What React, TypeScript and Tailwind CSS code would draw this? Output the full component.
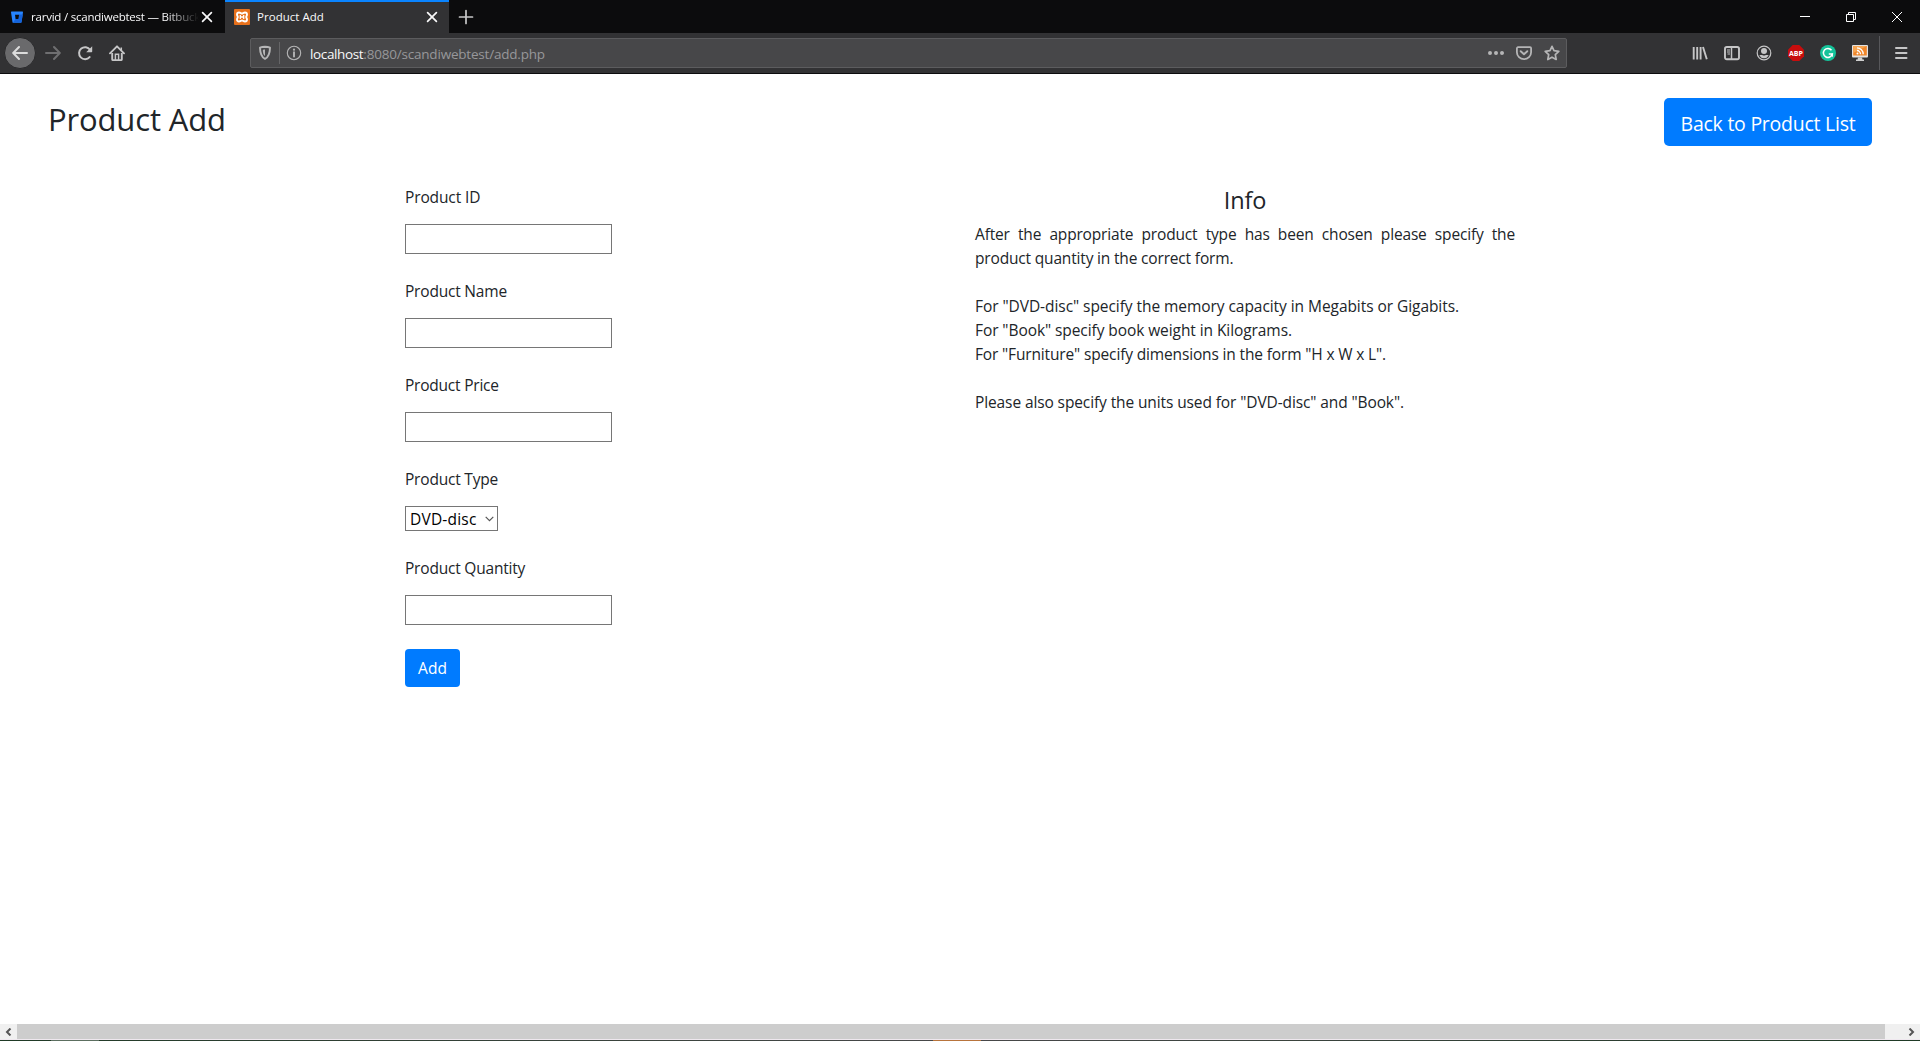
import type { ReactNode } from 'react';

function Icon({ size = 16, children, className = '' }: { size?: number; children: ReactNode; className?: string }) {
  return (
    <svg width={size} height={size} viewBox={`0 0 ${size} ${size}`} fill="none" className={`block shrink-0 ${className}`}>
      {children}
    </svg>
  );
}

function CloseTab() {
  return (
    <Icon>
      <path d="M3.6 3.6l8.8 8.8M12.4 3.6l-8.8 8.8" stroke="#f9f9fa" strokeWidth="1.7" strokeLinecap="round" />
    </Icon>
  );
}

function TabBar() {
  return (
    <div className="flex h-[33px] bg-[#0c0c0d] text-[#f9f9fa]">
      <div className="flex w-[225px] items-center pt-px pr-[9px] pl-[9px]">
        <Icon>
          <path d="M2.6 2.5h10.8a.6.6 0 0 1 .6.7l-1.5 10a.6.6 0 0 1-.6.5H4.1a.6.6 0 0 1-.6-.5L2 3.2a.6.6 0 0 1 .6-.7z" fill="#2684ff" />
          <path d="M13.8 5.5H10L9.4 10H6.5L4 13.5h8.1a.6.6 0 0 0 .4-.4z" fill="#1463dc" />
          <path d="M6 5.7h4.1L9.4 10H6.6z" fill="#0c0c0d" />
        </Icon>
        <div className="ml-[6px] w-[168px] overflow-hidden text-[11.5px] leading-4 tracking-[-0.22px] whitespace-nowrap [mask-image:linear-gradient(to_right,black_calc(100%_-_34px),transparent)]">
          rarvid / scandiwebtest — Bitbucket
        </div>
        <CloseTab />
      </div>
      <div className="flex w-[224px] items-center border-t-2 border-[#0a84ff] bg-[#323234] pr-[9px] pb-px pl-[9px]">
        <Icon>
          <rect width="16" height="16" rx="1" fill="#e8711c" />
          <path d="M5 3.500c1.500 0 2 1.100 3 1.100s1.500-1.100 3-1.100c1.300 0 2 .9 2 2.100 0 1.100-.8 1.600-.8 2.400s.8 1.300.8 2.400c0 1.200-.7 2.100-2 2.100-1.500 0-2-1.100-3-1.100s-1.500 1.100-3 1.100c-1.300 0-2-.9-2-2.100 0-1.100.8-1.600.8-2.400S3 6.700 3 5.600c0-1.200.7-2.100 2-2.100z" stroke="#fff" strokeWidth="1.900" />
          <path d="M6.300 6v4M9.700 6v4M6.300 8h3.400" stroke="#fff" strokeWidth="1.300" />
        </Icon>
        <div className="ml-[7px] grow text-[11.5px] leading-4 tracking-[0.03px] whitespace-nowrap">Product Add</div>
        <CloseTab />
      </div>
      <div className="flex w-[34px] items-center justify-center">
        <Icon>
          <path d="M8 1.500v13M1.500 8h13" stroke="#c8c8c9" strokeWidth="1.700" strokeLinecap="round" />
        </Icon>
      </div>
      <div className="ml-auto flex">
        <div className="flex w-[46px] items-center justify-center">
          <Icon size={10}><path d="M0 4.500h10" stroke="#fff" /></Icon>
        </div>
        <div className="flex w-[46px] items-center justify-center">
          <Icon size={10}>
            <path d="M.5 2.500h7v7h-7zM2.500 2.500v-2h7v7h-2" stroke="#fff" />
          </Icon>
        </div>
        <div className="flex w-[46px] items-center justify-center">
          <Icon size={10}><path d="M0 0l10 10M10 0L0 10" stroke="#fff" /></Icon>
        </div>
      </div>
    </div>
  );
}

function AddressBar() {
  return (
    <div className="ml-[125px] flex h-[30px] w-[1317px] items-center rounded-[2px] border border-[#5c5c5e] bg-[#474749] pl-[6px] text-[#b5b5b6]">
      <Icon>
        <path d="M8 1.800c2 .1 3.700.4 5 .9-.1 5.100-.8 9.100-5 11.100C3.800 11.800 3.100 7.800 3 2.700 4.300 2.200 6 1.900 8 1.800z" stroke="currentColor" strokeWidth="1.900" strokeLinejoin="round" />
        <path d="M8 4.600c-.8 0-1.500.1-2.200.3.100 3.100.6 4.900 2.200 6.100z" fill="currentColor" />
      </Icon>
      <div className="ml-[6px] h-[22px] w-px bg-[#656567]" />
      <Icon className="ml-[6px]">
        <circle cx="8" cy="8" r="6.700" stroke="currentColor" strokeWidth="1.100" />
        <circle cx="8" cy="4.700" r="1.100" fill="currentColor" />
        <path d="M8 7.200v4.300" stroke="currentColor" strokeWidth="1.900" strokeLinecap="round" />
      </Icon>
      <div className="ml-[8px] pt-px text-[13.5px] leading-5 whitespace-nowrap">
        <span className="tracking-[-0.36px] text-[#f9f9fa]">localhost</span>
        <span className="tracking-[-0.2px] text-[#97979a]">:8080/scandiwebtest/add.php</span>
      </div>
      <div className="ml-auto flex gap-3 pr-[6px]">
        <Icon>
          <path d="M2 8h.01M8 8h.01M14 8h.01" stroke="currentColor" strokeWidth="4" strokeLinecap="round" />
        </Icon>
        <Icon>
          <path d="M2 2.200h12a1.100 1.100 0 0 1 1.100 1.100v4A7.100 6.800 0 0 1 .9 7.300v-4A1.100 1.100 0 0 1 2 2.200z" stroke="currentColor" strokeWidth="1.800" />
          <path d="M4.700 6.200L8 9.200l3.300-3" stroke="currentColor" strokeWidth="1.900" strokeLinecap="round" strokeLinejoin="round" />
        </Icon>
        <Icon>
          <path d="M8 1.300l2 4.400 4.800.6-3.500 3.300.9 4.900L8 12.200l-4.200 2.300.9-4.900L1.200 6.300 6 5.700z" stroke="currentColor" strokeWidth="1.700" strokeLinejoin="round" />
        </Icon>
      </div>
    </div>
  );
}

function Toolbar() {
  return (
    <div className="flex h-[41px] items-center border-b border-[#0c0c0d] bg-[#323234] text-[#c6c6c7]">
      <div className="ml-1 flex size-8 items-center justify-center rounded-full border border-[#29292b] bg-[#6a6a6c]">
        <Icon>
          <path d="M15 8H1.500M7 2L1.200 8 7 14" stroke="#dcdcdc" strokeWidth="2" strokeLinecap="round" strokeLinejoin="round" />
        </Icon>
      </div>
      <Icon className="ml-[9px]">
        <path d="M1 8h13.500M9 2l5.800 6L9 14" stroke="#6f6f71" strokeWidth="2" strokeLinecap="round" strokeLinejoin="round" />
      </Icon>
      <Icon className="ml-4">
        <path d="M12.600 12.100A6 6 0 1 1 13 4.700" stroke="currentColor" strokeWidth="2" strokeLinecap="round" />
        <path d="M15.200 1.200v5.300a.7.700 0 0 1-.7.700H9.200z" fill="currentColor" />
      </Icon>
      <Icon className="ml-4">
        <path d="M1 8.300L8 1.300l7 7" stroke="currentColor" strokeWidth="1.900" strokeLinecap="round" strokeLinejoin="round" />
        <path d="M3.200 8v6.300a.8.800 0 0 0 .8.800h8a.8.800 0 0 0 .8-.8V8" stroke="currentColor" strokeWidth="1.900" />
        <path d="M6.400 15V9.300h3.200V15M12.300 2.500v3" stroke="currentColor" strokeWidth="1.500" />
      </Icon>
      <AddressBar />
      <div className="ml-[125px] flex gap-4">
        <Icon>
          <path d="M1.700 2v12.500M5.200 2v12.500M8.600 2v12.500M11 2l3.800 12.300" stroke="currentColor" strokeWidth="1.900" />
        </Icon>
        <Icon>
          <rect x="1" y="2" width="14" height="12.300" rx="1.800" stroke="currentColor" strokeWidth="1.900" />
          <path d="M7.500 2v12.300" stroke="currentColor" strokeWidth="1.500" />
          <path d="M3 5h3M3 7h3M3.500 9H6" stroke="currentColor" />
        </Icon>
        <Icon>
          <circle cx="8" cy="8" r="6.800" stroke="currentColor" strokeWidth="1.200" />
          <circle cx="8" cy="6" r="3" fill="currentColor" />
          <path d="M3.300 10.600c1.400-.9 2.200-.6 2.900-.6 1.100.7 2.500.7 3.600 0 .7 0 1.500-.3 2.900.6A5.500 5.500 0 0 1 8 13.300a5.500 5.500 0 0 1-4.700-2.700z" fill="currentColor" />
        </Icon>
        <svg width="16" height="16" viewBox="0 0 16 16" className="block">
          <path d="M4.700 0h6.600L16 4.700v6.600L11.300 16H4.700L0 11.300V4.700z" fill="#c70d0d" />
          <text x="8" y="10.800" textAnchor="middle" fontSize="7.600" fontWeight="700" fill="#fff" textLength="14" lengthAdjust="spacingAndGlyphs">ABP</text>
        </svg>
        <Icon>
          <circle cx="8" cy="8" r="8" fill="#15c39a" />
          <path d="M11.500 5.200A4.500 4.500 0 1 0 12.300 9H8.800" stroke="#fff" strokeWidth="1.500" />
          <path d="M12.300 8.500v3.300" stroke="#fff" strokeWidth="1.200" />
        </Icon>
        <Icon>
          <rect width="16" height="12.500" rx="1" fill="#e4e2e0" />
          <rect x="1.200" y="1" width="13.600" height="9.500" fill="#f0862a" />
          <path d="M1.200 1h13.600L1.200 8z" fill="#f6a552" />
          <path d="M5.500 8.600h.01" stroke="#fff" strokeWidth="2" strokeLinecap="round" />
          <path d="M5 5.500A3.600 3.600 0 0 1 8.500 9.200M5 2.800a6.300 6.300 0 0 1 6.200 6.400" stroke="#fff" strokeWidth="1.300" />
          <path d="M6 12.500h4l.5 2H12V16H4v-1.500h1.500z" fill="#cfcfcf" />
        </Icon>
      </div>
      <div className="ml-[11px] h-[34px] w-px bg-[#57575a]" />
      <Icon className="ml-[13px]">
        <path d="M3 3h10.500M3 8h10.500M3 13h10.500" stroke="currentColor" strokeWidth="2" strokeLinecap="round" />
      </Icon>
    </div>
  );
}

function Field({ label, tracking }: { label: string; tracking: string }) {
  return (
    <label className="block">
      <span className={`block leading-6 ${tracking}`}>{label}</span>
      <input type="text" className="mt-[15px] block h-[30px] w-[207px] border border-[#767676] bg-white px-1" />
    </label>
  );
}

function ProductForm() {
  return (
    <form className="flex w-[570px] flex-col items-start gap-[25px]">
      <Field label="Product ID" tracking="tracking-[-0.12px]" />
      <Field label="Product Name" tracking="tracking-[-0.2px]" />
      <Field label="Product Price" tracking="tracking-[-0.22px]" />
      <div>
        <div className="leading-6 tracking-[-0.2px]">Product Type</div>
        <button type="button" className="mt-[15px] flex h-[25px] w-[93px] items-center border border-[#767676] bg-white pl-1 leading-6 tracking-[0.2px] text-black">
          DVD-disc
          <svg width="9" height="6" viewBox="0 0 9 6" fill="none" className="ml-auto mr-[3px]">
            <path d="M.7.900l3.800 3.700L8.300.900" stroke="#555" strokeWidth="1.200" />
          </svg>
        </button>
      </div>
      <Field label="Product Quantity" tracking="tracking-[-0.2px]" />
      <button type="button" className="-mt-px flex h-[38px] w-[55px] items-center justify-center rounded-[4px] bg-[#007bff] pt-[2px] text-white">
        Add
      </button>
    </form>
  );
}

function Info() {
  return (
    <section className="w-[540px] leading-6">
      <h2 className="pt-px text-center text-[23.5px] leading-[29px] font-normal tracking-[-0.15px]">Info</h2>
      <p className="mt-[7px] text-justify tracking-[-0.17px]">
        After the appropriate product type has been chosen please specify the product quantity in the correct form.
      </p>
      <p className="mt-6 tracking-[-0.06px]">For "DVD-disc" specify the memory capacity in Megabits or Gigabits.</p>
      <p className="tracking-[-0.08px]">For "Book" specify book weight in Kilograms.</p>
      <p className="tracking-[-0.15px]">For "Furniture" specify dimensions in the form "H x W x L".</p>
      <p className="mt-6 tracking-[-0.11px]">Please also specify the units used for "DVD-disc" and "Book".</p>
    </section>
  );
}

function ScrollBar() {
  return (
    <div className="flex h-[15px] items-center justify-between bg-[#f0f0f0]">
      <div className="flex w-[17px] justify-center">
        <svg width="7" height="8" viewBox="0 0 7 8" fill="none"><path d="M5.500.500L2 4l3.500 3.500" stroke="#555" strokeWidth="2" /></svg>
      </div>
      <div className="mr-auto h-full w-[1868px] bg-[#cdcdcd]" />
      <div className="flex w-[17px] justify-center">
        <svg width="7" height="8" viewBox="0 0 7 8" fill="none"><path d="M1.500.500L5 4 1.500 7.500" stroke="#555" strokeWidth="2" /></svg>
      </div>
    </div>
  );
}

export default function App() {
  return (
    <div className="flex h-[1041px] w-[1920px] flex-col overflow-hidden bg-white font-['Open_Sans',sans-serif] text-[15.5px] text-[#212529]">
      <TabBar />
      <Toolbar />
      <main className="grow">
        <header className="flex items-start justify-between px-12 pt-6">
          <h1 className="pt-[2px] text-[31px] leading-[38px] font-normal tracking-[-0.14px]">Product Add</h1>
          <button type="button" className="flex h-12 w-[208px] items-center justify-center rounded-[5px] bg-[#007bff] pt-[3px] text-[19.5px] tracking-[-0.25px] text-white">
            Back to Product List
          </button>
        </header>
        <div className="flex pt-[39px] pl-[405px]">
          <ProductForm />
          <Info />
        </div>
      </main>
      <ScrollBar />
      <div className="h-px bg-[#efe8ef]" />
      <div className="flex h-px bg-gradient-to-r from-[#1f3a26] via-[#48484a] to-[#1f3a26]">
        <div className="ml-[51px] w-12 bg-[#5c6f60]" />
        <div className="ml-[834px] w-12 bg-[#b8743c]" />
      </div>
    </div>
  );
}
